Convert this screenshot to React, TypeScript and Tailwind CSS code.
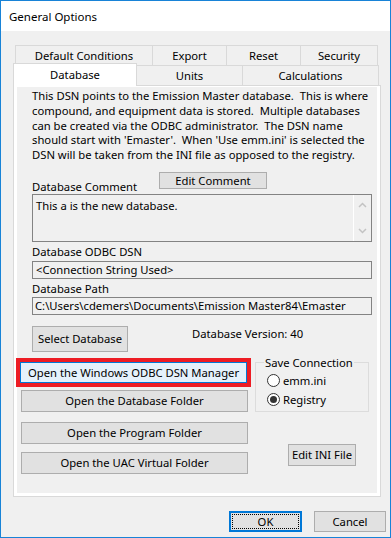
const BTN =
  'flex items-center justify-center bg-[#e1e1e1] border border-[#adadad] leading-[15px] text-black whitespace-nowrap';
const BOX = 'border border-[#838383] bg-[#f0f0f0] leading-[15px]';

function Radio({ label, checked }: { label: string; checked?: boolean }) {
  return (
    <div className="h-[19px] flex items-center gap-[3px]">
      <span className="w-[13px] h-[13px] rounded-full border border-[#333333] bg-white flex items-center justify-center">
        {checked && <span className="w-[7px] h-[7px] rounded-full bg-[#333333]" />}
      </span>
      <span className="leading-[15px]">{label}</span>
    </div>
  );
}

function Chevron({ up }: { up?: boolean }) {
  return (
    <svg width="9" height="6" viewBox="0 0 9 6">
      <path
        d={up ? 'M1 5 L4.5 1.5 L8 5' : 'M1 1 L4.5 4.5 L8 1'}
        fill="none"
        stroke="#c3c3c3"
        strokeWidth="1.5"
      />
    </svg>
  );
}

export default function App() {
  return (
    <div className="w-[391px] h-[538px] border border-[#1883d7] bg-[#f0f0f0] flex flex-col text-[11.25px] text-black font-['Noto_Sans',sans-serif]">
      {/* Title bar */}
      <div className="h-[30px] bg-white flex items-center pl-[8px] leading-[15px] text-[11.5px]">General Options</div>

      <div className="pl-[12px] pt-[14px]">
        {/* Tabs row 1 */}
        <div className="flex pl-[2px] h-[20px]">
          {[
            ['Default Conditions', 'w-[138px]'],
            ['Export', 'w-[75px] -ml-px'],
            ['Reset', 'w-[75px] -ml-px'],
            ['Security', 'w-[78px] -ml-px'],
          ].map(([t, w]) => (
            <div
              key={t}
              className={`${w} h-[20px] border border-b-0 border-[#d9d9d9] flex items-center justify-center leading-[15px]`}
            >
              {t}
            </div>
          ))}
        </div>
        {/* Tabs row 2 */}
        <div className="flex h-[20px]">
          <div className="relative z-10 w-[124px] h-[23px] -mt-[2px] bg-white border border-b-0 border-[#d9d9d9] flex items-center justify-center leading-[15px] pb-[1px]">
            Database
          </div>
          <div className="w-[106px] h-[20px] border border-b-0 border-l-0 border-[#d9d9d9] flex items-center justify-center leading-[15px]">
            Units
          </div>
          <div className="w-[136px] h-[20px] border border-b-0 border-l-0 border-[#d9d9d9] flex items-center justify-center leading-[15px]">
            Calculations
          </div>
        </div>

        {/* Tab page */}
        <div className="w-[368px] h-[412px] border border-[#d9d9d9] bg-white px-[3px] pt-[1px] pb-[3px]">
          <div className="h-full bg-[#f0f0f0] flex flex-col">
            <div className="pl-[15px] pr-[5px] flex flex-col">
              <p className="mt-[2px] leading-[14.8px] whitespace-pre">
                {"This DSN points to the Emission Master database.  This is where\n" +
                  "compound, and equipment data is stored.  Multiple databases\n" +
                  "can be created via the ODBC administrator.  The DSN name\n" +
                  "should start with 'Emaster'.  When 'Use emm.ini' is selected the\n" +
                  "DSN will be taken from the INI file as opposed to the registry."}
              </p>

              <div className="mt-[9px] h-[22px] flex items-start">
                <span className="w-[127px] mt-[7px] leading-[15px]">Database Comment</span>
                <button className={`${BTN} w-[108px] h-[17px]`}>Edit Comment</button>
              </div>

              <div className={`${BOX} h-[48px] flex`}>
                <div className="flex-1 pl-[3px] pt-[3px]">This a is the new database.</div>
                <div className="w-[18px] border-l border-white flex flex-col items-center justify-between py-[7px]">
                  <Chevron up />
                  <Chevron />
                </div>
              </div>

              <span className="mt-[2px] leading-[15px]">Database ODBC DSN</span>
              <div className={`${BOX} mt-[2px] h-[18px] flex items-center pl-[3px]`}>&lt;Connection String Used&gt;</div>

              <span className="mt-[2px] leading-[15px]">Database Path</span>
              <div className={`${BOX} mt-[1px] h-[18px] flex items-center pl-[2px]`}>
                C:\Users\cdemers\Documents\Emission Master84\Emaster
              </div>

              <div className="mt-[11px] h-[26px] flex items-start">
                <button className={`${BTN} w-[96px] h-[26px]`}>Select Database</button>
                <span className="ml-[64px] leading-[15px]">Database Version: 40</span>
              </div>
            </div>

            {/* Lower section */}
            <div className="mt-[6px] -ml-px flex">
              <div className="w-[235px] flex flex-col">
                <div className="h-[29px] border-4 border-[#ed1c24]">
                  <button className="w-full h-full flex items-center justify-center bg-[#e5f1fb] border border-[#0078d7] leading-[15px] whitespace-nowrap">
                    Open the Windows ODBC DSN Manager
                  </button>
                </div>
                <button className={`${BTN} mt-[3px] ml-[5px] w-[227px] h-[22px]`}>Open the Database Folder</button>
                <button className={`${BTN} mt-[10px] ml-[5px] w-[227px] h-[22px]`}>Open the Program Folder</button>
                <button className={`${BTN} mt-[8px] ml-[5px] w-[227px] h-[22px]`}>Open the UAC Virtual Folder</button>
              </div>

              <div className="ml-[4px] flex flex-col">
                <div className="relative mt-[4px] w-[114px] h-[50px] border border-[#dcdcdc] pl-[11px] pt-[8px]">
                  <span className="absolute -top-[8px] left-[8px] px-[1px] bg-[#f0f0f0] leading-[15px]">
                    Save Connection
                  </span>
                  <Radio label="emm.ini" />
                  <Radio label="Registry" checked />
                </div>
                <button className={`${BTN} mt-[32px] ml-[33px] w-[68px] h-[22px]`}>Edit INI File</button>
              </div>
            </div>
          </div>
        </div>
      </div>

      {/* Footer */}
      <div className="mt-[14px] flex justify-end gap-[12px] pr-[4px]">
        <button className="w-[73px] h-[21px] border-2 border-[#0078d7] bg-[#e1e1e1] p-[1px]">
          <div className="w-full h-full border border-dotted border-black flex items-center justify-center leading-[15px]">
            OK
          </div>
        </button>
        <button className={`${BTN} w-[72px] h-[21px]`}>Cancel</button>
      </div>
    </div>
  );
}
